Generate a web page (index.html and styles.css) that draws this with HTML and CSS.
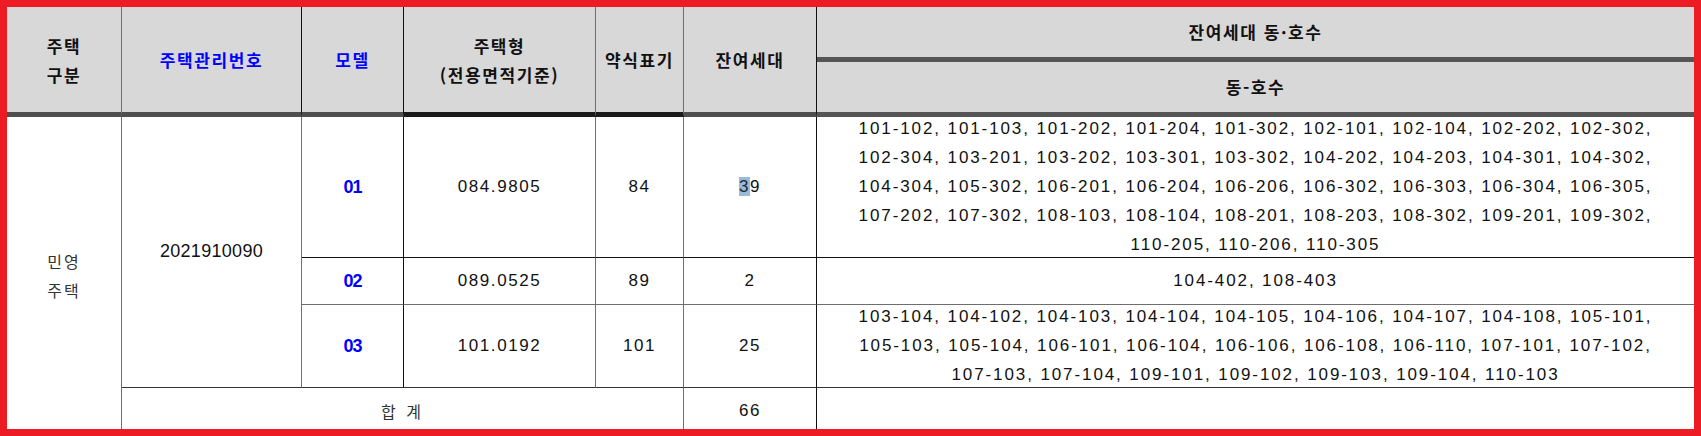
FILE: index.html
```html
<!DOCTYPE html>
<html lang="ko">
<head>
<meta charset="utf-8">
<title>잔여세대 현황</title>
<link rel="stylesheet" href="styles.css">
</head>
<body>
<div class="frame">
<table class="grid">
  <colgroup>
    <col class="c1"><col class="c2"><col class="c3"><col class="c4"><col class="c5"><col class="c6"><col class="c7">
  </colgroup>
  <thead>
    <tr class="h-top">
      <th rowspan="2" class="hd gray-r">주택<br>구분</th>
      <th rowspan="2" class="hd blue black-r">주택관리번호</th>
      <th rowspan="2" class="hd blue black-r">모델</th>
      <th rowspan="2" class="hd gray-r black-b">주택형<br>(전용면적기준)</th>
      <th rowspan="2" class="hd gray-r black-b">약식표기</th>
      <th rowspan="2" class="hd black-r">잔여세대</th>
      <th class="hd sub">잔여세대 동·호수</th>
    </tr>
    <tr class="h-bot">
      <th class="hd sub">동-호수</th>
    </tr>
  </thead>
  <tbody>
    <tr class="r1">
      <td rowspan="4" class="kind gray-r">민영<br>주택</td>
      <td rowspan="3" class="code gray-r black-b2">2021910090</td>
      <td class="model black-r black-b">01</td>
      <td class="num gray-r black-b">084.9805</td>
      <td class="num gray-r black-b">84</td>
      <td class="num black-r black-b"><span class="sel">3</span>9</td>
      <td class="units black-b"><div class="lines">101-102, 101-103, 101-202, 101-204, 101-302, 102-101, 102-104, 102-202, 102-302, 102-304, 103-201, 103-202, 103-301, 103-302, 104-202, 104-203, 104-301, 104-302, 104-304, 105-302, 106-201, 106-204, 106-206, 106-302, 106-303, 106-304, 106-305, 107-202, 107-302, 108-103, 108-104, 108-201, 108-203, 108-302, 109-201, 109-302, 110-205, 110-206, 110-305</div></td>
    </tr>
    <tr class="r2">
      <td class="model black-r gray-b">02</td>
      <td class="num gray-r gray-b">089.0525</td>
      <td class="num gray-r gray-b">89</td>
      <td class="num black-r gray-b">2</td>
      <td class="units gray-b"><div class="lines">104-402, 108-403</div></td>
    </tr>
    <tr class="r3">
      <td class="model black-r dark-b">03</td>
      <td class="num gray-r dark-b">101.0192</td>
      <td class="num gray-r dark-b">101</td>
      <td class="num black-r dark-b">25</td>
      <td class="units dark-b"><div class="lines">103-104, 104-102, 104-103, 104-104, 104-105, 104-106, 104-107, 104-108, 105-101, 105-103, 105-104, 106-101, 106-104, 106-106, 106-108, 106-110, 107-101, 107-102, 107-103, 107-104, 109-101, 109-102, 109-103, 109-104, 110-103</div></td>
    </tr>
    <tr class="r4">
      <td colspan="4" class="total gray-r">합 계</td>
      <td class="num black-r">66</td>
      <td class="units"></td>
    </tr>
  </tbody>
</table>
</div>
</body>
</html>
```

FILE: styles.css
```css
* { box-sizing: border-box; }

html, body {
  margin: 0;
  padding: 0;
  background: #ffffff;
}

body {
  font-family: "Liberation Sans", "Noto Sans CJK KR", sans-serif;
  color: #111;
}

.frame {
  width: 1701px;
  height: 436px;
  border: 7px solid #ed1c24;
  background: #ffffff;
  overflow: hidden;
}

.grid {
  width: 1687px;
  height: 422px;
  border-collapse: separate;
  border-spacing: 0;
  table-layout: fixed;
}

.c1 { width: 115px; }
.c2 { width: 180px; }
.c3 { width: 102px; }
.c4 { width: 192px; }
.c5 { width: 88px; }
.c6 { width: 133px; }
.c7 { width: 877px; }

th, td {
  padding: 0;
  text-align: center;
  vertical-align: middle;
  border: 0 solid #6e6e6e;
}

.h-top { height: 55px; }
.h-bot { height: 55px; }
.r1 { height: 140px; }
.r2 { height: 47px; }
.r3 { height: 83px; }
.r4 { height: 42px; }

.hd {
  background: #d8d8d8;
  font-family: "Noto Sans CJK KR", sans-serif;
  font-weight: 700;
  font-size: 17px;
  letter-spacing: 1.6px;
  line-height: 29px;
  color: #111;
  border-bottom: 5px solid #4f4f4f;
}

.hd.blue { color: #0000ff; }

.hd.sub {
  border-bottom: 5px solid #555555;
  padding-bottom: 2px;
}

.gray-r { border-right: 1px solid #707070; }
.black-r { border-right: 1px solid #111; }
.black-b { border-bottom: 1px solid #111; }
.gray-b { border-bottom: 1px solid #6e6e6e; }
.dark-b { border-bottom: 1px solid #333; }
.black-b2 { border-bottom: 1px solid #333; }

.hd.black-b { border-bottom: 5px solid #1a1a1a; }

.kind {
  font-family: "Noto Sans CJK KR", sans-serif;
  font-size: 16px;
  letter-spacing: 2px;
  line-height: 29px;
  color: #333;
  padding-top: 4px;
}

.code {
  font-size: 18px;
  letter-spacing: 0.3px;
  color: #111;
  padding-bottom: 2px;
}

.model {
  font-size: 18px;
  font-weight: 700;
  letter-spacing: -1px;
  color: #0000ff;
}

.num {
  font-size: 17px;
  letter-spacing: 1.6px;
  color: #111;
}

.sel {
  background: #9bbad8;
  color: #1a2a3a;
}

.units {
  font-size: 17px;
  letter-spacing: 1.9px;
  color: #111;
  padding: 0 20px;
}

.lines {
  line-height: 29px;
  margin: -3px 0 -2px;
}

.total {
  font-family: "Noto Sans CJK KR", sans-serif;
  font-size: 16px;
  letter-spacing: 3px;
  color: #333;
  padding-top: 4px;
}

.r4 .num { padding-top: 4px; }
```
